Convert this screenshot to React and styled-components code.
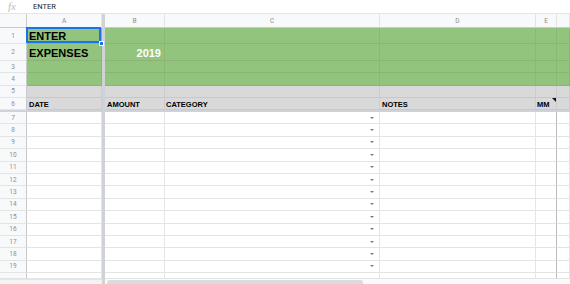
import React from 'react';
import styled, { createGlobalStyle, css } from 'styled-components';

const GREEN = '#93c47d';
const GRAY = '#d9d9d9';
const FREEZE = '#cfd2d6';
const GRID = '#e3e4e4';

// row header | A | freeze | B | C | D | E | F (partial)
const COLS = '27px 75px 3px 60px 215px 156px 21px 1fr';
const LETTERS = ['A', 'B', 'C', 'D', 'E'];

const GlobalStyle = createGlobalStyle`
  html, body {
    margin: 0;
    padding: 0;
    background: #fff;
  }
  body {
    font-family: "Liberation Sans", Arial, sans-serif;
  }
`;

const Page = styled.div`
  width: 570px;
  height: 284px;
  overflow: hidden;
  display: flex;
  flex-direction: column;
`;

const FormulaBar = styled.div`
  height: 14px;
  flex: none;
  display: flex;
  align-items: center;
  box-sizing: border-box;
  border-bottom: 1px solid #e6e6e6;
`;

const Fx = styled.span`
  width: 33px;
  padding-left: 8px;
  box-sizing: border-box;
  font-family: "Liberation Serif", serif;
  font-style: italic;
  font-size: 11px;
  color: #bdbdbd;
  line-height: 1;
`;

const FormulaText = styled.span`
  font-family: Roboto, "Liberation Sans", sans-serif;
  font-size: 7.5px;
  color: #222;
`;

const Row = styled.div`
  display: grid;
  grid-template-columns: ${COLS};
  height: ${p => p.$h}px;
  flex: none;
`;

const Head = styled.div`
  box-sizing: border-box;
  background: #f8f9fa;
  display: flex;
  align-items: center;
  justify-content: center;
  font-family: Roboto, "Liberation Sans", sans-serif;
  font-size: 6.5px;
  color: #8a8e92;
  border-right: 1px solid ${p => (p.$corner ? '#c7c9cc' : GRID)};
  border-bottom: 1px solid ${p => (p.$bottom ? '#c7c9cc' : GRID)};
  overflow: hidden;
`;

const RowHead = styled(Head)`
  border-right: 1px solid #c7c9cc;
  border-bottom: 1px solid ${GRID};
`;

const Freeze = styled.div`
  background: ${FREEZE};
`;

const Cell = styled.div`
  position: relative;
  box-sizing: border-box;
  display: flex;
  align-items: flex-end;
  justify-content: ${p => (p.$right ? 'flex-end' : 'flex-start')};
  padding: 0 ${p => (p.$right ? 3 : 2)}px ${p => p.$pb ?? 2}px ${p => p.$pl ?? 2}px;
  background: ${p => p.$bg || '#fff'};
  border-right: 1px solid ${p => p.$edge || (p.$bg ? 'rgba(0,0,0,0.06)' : GRID)};
  border-bottom: 1px solid ${p => (p.$bg ? 'rgba(0,0,0,0.07)' : GRID)};
  font-weight: bold;
  font-size: ${p => p.$size || 11}px;
  color: ${p => p.$color || '#000'};
  white-space: nowrap;
  overflow: visible;
  line-height: 1;

  ${p =>
    p.$selected &&
    css`
      &::after {
        content: '';
        position: absolute;
        inset: -1px 0 0 -1px;
        border: 2px solid #1a73e8;
        pointer-events: none;
        z-index: 2;
      }
      &::before {
        content: '';
        position: absolute;
        right: -3px;
        bottom: -3px;
        width: 5px;
        height: 5px;
        background: #1a73e8;
        border: 1px solid #fff;
        box-sizing: border-box;
        z-index: 3;
      }
    `}

  ${p =>
    p.$note &&
    css`
      &::after {
        content: '';
        position: absolute;
        top: 0;
        right: 0;
        border-top: 4px solid #111;
        border-left: 4px solid transparent;
      }
    `}
`;

const DropCell = styled(Cell)`
  align-items: center;
  justify-content: flex-end;
  padding: 0 5px 0 0;
`;

const Caret = styled.span`
  width: 0;
  height: 0;
  border-left: 2px solid transparent;
  border-right: 2px solid transparent;
  border-top: 2.5px solid #7a7a7a;
`;

const HFreeze = styled.div`
  height: 2px;
  flex: none;
  background: ${FREEZE};
`;

const ScrollRow = styled.div`
  flex: 1;
  display: grid;
  grid-template-columns: 102px 3px 1fr;
`;

const ScrollPad = styled.div`
  background: #f3f3f3;
  border-top: 1px solid #e6e6e6;
`;

const Track = styled.div`
  padding: 1px 0 0 2px;
  background: #fafafa;
`;

const Thumb = styled.div`
  width: 256px;
  height: 6px;
  border-radius: 3px;
  background: #dadbdd;
`;

const topRows = [
  { n: 1, h: 16, bg: GREEN, pb: 1.5, cells: { A: 'ENTER' } },
  { n: 2, h: 17, bg: GREEN, pb: 1, cells: { A: 'EXPENSES', B: '2019' } },
  { n: 3, h: 12, bg: GREEN },
  { n: 4, h: 12.5, bg: GREEN },
  { n: 5, h: 12.5, bg: GRAY },
  {
    n: 6,
    h: 12,
    bg: GRAY,
    pb: 1,
    small: true,
    cells: { A: 'DATE', B: 'AMOUNT', C: 'CATEGORY', D: 'NOTES', E: 'MM' },
  },
];

const bodyRows = Array.from({ length: 13 }, (_, i) => i + 7);

function TopRow({ row }) {
  const c = row.cells || {};
  const size = row.small ? 7.5 : 11;
  return (
    <Row $h={row.h}>
      <RowHead>{row.n}</RowHead>
      <Cell $bg={row.bg} $pb={row.pb} $size={size} $selected={row.n === 1}>
        {c.A}
      </Cell>
      <Freeze />
      <Cell $bg={row.bg} $pb={row.pb} $size={size} $right={!row.small} $color={row.small ? '#000' : '#fff'}>
        {c.B}
      </Cell>
      <Cell $bg={row.bg} $pb={row.pb} $size={size} $pl={1}>
        {c.C}
      </Cell>
      <Cell $bg={row.bg} $pb={row.pb} $size={size}>
        {c.D}
      </Cell>
      <Cell $bg={row.bg} $pb={row.pb} $size={size} $pl={1} $note={row.n === 6}>
        {c.E}
      </Cell>
      <Cell $bg={row.bg} />
    </Row>
  );
}

function BodyRow({ n, h = 12.4 }) {
  return (
    <Row $h={h}>
      <RowHead>{n}</RowHead>
      <Cell />
      <Freeze />
      <Cell />
      <DropCell>{n && <Caret />}</DropCell>
      <Cell />
      <Cell $edge="#b9bbbd" />
      <Cell />
    </Row>
  );
}

export default function App() {
  return (
    <Page>
      <GlobalStyle />
      <FormulaBar>
        <Fx>fx</Fx>
        <FormulaText>ENTER</FormulaText>
      </FormulaBar>

      <Row $h={14}>
        <Head $corner $bottom />
        <Head $bottom>A</Head>
        <Freeze />
        {LETTERS.slice(1).map(l => (
          <Head key={l} $bottom>
            {l}
          </Head>
        ))}
        <Head $bottom />
      </Row>

      {topRows.map(r => (
        <TopRow key={r.n} row={r} />
      ))}
      <HFreeze />

      {bodyRows.map(n => (
        <BodyRow key={n} n={n} />
      ))}
      <BodyRow h={5.8} />

      <ScrollRow>
        <ScrollPad />
        <Freeze />
        <Track>
          <Thumb />
        </Track>
      </ScrollRow>
    </Page>
  );
}
